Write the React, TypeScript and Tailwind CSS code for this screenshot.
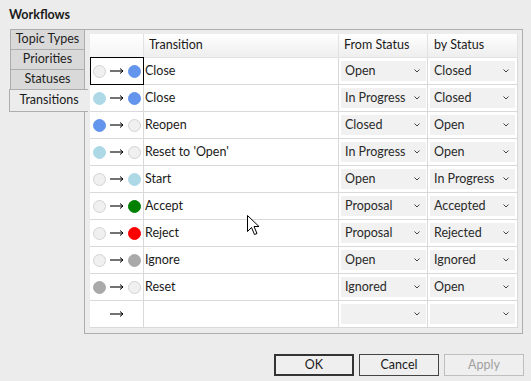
import React from "react";

type Dot = "none" | "empty" | "blue" | "light" | "green" | "red" | "gray";

const dotColors: Record<Exclude<Dot, "none">, { fill: string; stroke: string }> = {
  empty: { fill: "#f0f0f0", stroke: "#d2d2d2" },
  blue: { fill: "#6495ed", stroke: "#6495ed" },
  light: { fill: "#add8e6", stroke: "#add8e6" },
  green: { fill: "#008000", stroke: "#008000" },
  red: { fill: "#ff0000", stroke: "#ff0000" },
  gray: { fill: "#a9a9a9", stroke: "#a9a9a9" },
};

const rows: { from: Dot; to: Dot; name: string; fromStatus: string; byStatus: string }[] = [
  { from: "empty", to: "blue", name: "Close", fromStatus: "Open", byStatus: "Closed" },
  { from: "light", to: "blue", name: "Close", fromStatus: "In Progress", byStatus: "Closed" },
  { from: "blue", to: "empty", name: "Reopen", fromStatus: "Closed", byStatus: "Open" },
  { from: "light", to: "empty", name: "Reset to 'Open'", fromStatus: "In Progress", byStatus: "Open" },
  { from: "empty", to: "light", name: "Start", fromStatus: "Open", byStatus: "In Progress" },
  { from: "empty", to: "green", name: "Accept", fromStatus: "Proposal", byStatus: "Accepted" },
  { from: "empty", to: "red", name: "Reject", fromStatus: "Proposal", byStatus: "Rejected" },
  { from: "empty", to: "gray", name: "Ignore", fromStatus: "Open", byStatus: "Ignored" },
  { from: "gray", to: "empty", name: "Reset", fromStatus: "Ignored", byStatus: "Open" },
  { from: "none", to: "none", name: "", fromStatus: "", byStatus: "" },
];

function Circle({ kind }: { kind: Dot }) {
  if (kind === "none") return <span className="block h-[13px] w-[13px]" />;
  const c = dotColors[kind];
  return (
    <svg width="13" height="13" viewBox="0 0 13 13" className="block">
      <circle cx="6.5" cy="6.5" r="6" fill={c.fill} stroke={c.stroke} strokeWidth="1" />
    </svg>
  );
}

function Arrow() {
  return (
    <svg width="14" height="8" viewBox="0 0 14 8" className="block">
      <line x1="0" y1="4" x2="13" y2="4" stroke="#000" strokeWidth="1.1" />
      <polyline points="10,1.5 13,4 10,6.5" fill="none" stroke="#000" strokeWidth="1" />
    </svg>
  );
}

function Select({ value }: { value: string }) {
  return (
    <div className="ml-[2px] flex h-[20px] w-[85px] items-center justify-between bg-[#f1f1f1] pl-[4px] pr-[6px] text-[#2a2a2a]">
      <span className="whitespace-nowrap">{value}</span>
      <svg width="6" height="4" viewBox="0 0 6 4" className="block shrink-0">
        <polyline points="0.5,0.5 3,3 5.5,0.5" fill="none" stroke="#444" strokeWidth="1" />
      </svg>
    </div>
  );
}

function Tab({ label, first }: { label: string; first?: boolean }) {
  return (
    <div
      className={`ml-[1px] flex h-[21px] w-[75px] items-center justify-center border border-[#adadad] bg-[#d9d9d9] text-[#1e1e1e] ${first ? "" : "-mt-px"}`}
    >
      {label}
    </div>
  );
}

const cell = "flex h-[27px] items-center border-b border-r border-[#d9d9d9]";

export default function App() {
  return (
    <div className="relative h-[381px] w-[531px] overflow-hidden bg-[#ececec] font-['Lato',sans-serif] text-[12.5px] leading-none text-[#1a1a1a]">
      <div className="h-[29px] pl-[9px] pt-[9px] font-bold">Workflows</div>

      <div className="flex pl-[9px]">
        <div className="flex w-[75px] flex-col">
          <Tab label="Topic Types" first />
          <Tab label="Priorities" />
          <Tab label="Statuses" />
          <div className="relative z-10 -mt-px flex h-[23px] w-[79px] items-center justify-center border-b border-l border-t border-[#adadad] bg-[#ececec]">
            Transitions
          </div>
        </div>

        <div className="h-[305px] w-[439px] border border-[#adadad] pl-[5px] pt-[4px]">
          <div className="grid w-[428px] grid-cols-[54px_195px_89px_90px] bg-white">
            <div className="h-[24px] border-b border-r border-[#e2e2e2] bg-gradient-to-b from-white to-[#f4f4f4]" />
            <div className="flex h-[24px] items-center border-b border-r border-[#e2e2e2] bg-gradient-to-b from-white to-[#eeeeee] pl-[5px]">Transition</div>
            <div className="flex h-[24px] items-center border-b border-r border-[#e2e2e2] bg-gradient-to-b from-white to-[#eeeeee] pl-[5px]">From Status</div>
            <div className="flex h-[24px] items-center border-b border-r border-[#e2e2e2] bg-gradient-to-b from-white to-[#eeeeee] pl-[6px]">by Status</div>

            {rows.map((r, i) => (
              <React.Fragment key={i}>
                <div className={`${cell} relative gap-[4px] pl-[3px]`}>
                  <Circle kind={r.from} />
                  <Arrow />
                  <Circle kind={r.to} />
                  {i === 0 && <span className="absolute -top-px bottom-[-1px] left-0 right-[-1px] border border-black" />}
                </div>
                <div className={`${cell} pl-px`}>{r.name}</div>
                <div className={cell}>
                  <Select value={r.fromStatus} />
                </div>
                <div className={cell}>
                  <Select value={r.byStatus} />
                </div>
              </React.Fragment>
            ))}
          </div>
        </div>
      </div>

      <div className="mt-[20px] flex justify-end gap-[5px] pr-[7px]">
        <button className="flex h-[22px] w-[80px] items-center justify-center border-2 border-[#333] bg-[#efefef] text-[#1a1a1a]">OK</button>
        <button className="flex h-[22px] w-[80px] items-center justify-center border border-[#444] bg-[#efefef] text-[#1a1a1a]">Cancel</button>
        <button className="flex h-[22px] w-[80px] items-center justify-center border border-[#bfbfbf] bg-[#efefef] text-[#a0a0a0]">Apply</button>
      </div>

      <svg width="13" height="21" viewBox="0 0 13 21" className="absolute left-[247px] top-[215px]">
        <path d="M0.5 0.5 L0.5 16.5 L4.5 12.5 L7.5 19.5 L10 18.5 L7 11.5 L12 11.5 Z" fill="#fff" stroke="#000" strokeWidth="1" strokeLinejoin="round" />
      </svg>
    </div>
  );
}
